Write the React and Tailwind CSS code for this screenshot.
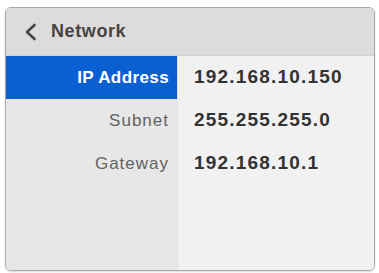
export default function App() {
  const rows = [
    { label: "IP Address", value: "192.168.10.150", active: true },
    { label: "Subnet", value: "255.255.255.0" },
    { label: "Gateway", value: "192.168.10.1" },
  ];

  return (
    <div className="h-[273px] w-[379px] bg-white pl-[5px] pt-[7px] font-['Liberation_Sans',Arial,sans-serif]">
      <div className="flex h-[264px] w-[370px] flex-col overflow-hidden rounded-[6px] border border-[#a9a9a9] shadow-[0_1px_2px_rgba(0,0,0,0.15)]">
        <div className="flex h-[48px] items-center gap-[14px] border-b border-[#d2d2d2] bg-[#dcdcdc] pl-[18px]">
          <svg width="13" height="18" viewBox="0 0 13 18" fill="none">
            <path d="M10.5 2 L3 9 L10.5 16" stroke="#444" strokeWidth="2.6" strokeLinecap="round" strokeLinejoin="round" />
          </svg>
          <span className="text-[18px] font-bold tracking-[0.6px] text-[#444]">Network</span>
        </div>
        <div className="flex flex-1">
          <div className="flex w-[172px] flex-col border-r border-[#e0e0e0] bg-[#e7e7e7]">
            {rows.map((r) => (
              <div
                key={r.label}
                className={
                  r.active
                    ? "flex h-[43px] items-center justify-end bg-[#0a60d3] pr-[8px] text-[17px] font-bold tracking-[0.4px] text-white"
                    : "flex h-[43px] items-center justify-end pr-[8px] text-[17px] tracking-[1px] text-[#626262]"
                }
              >
                {r.label}
              </div>
            ))}
          </div>
          <div className="flex flex-1 flex-col bg-[#f1f1f1] pl-[16px]">
            {rows.map((r) => (
              <div key={r.value} className="flex h-[43px] items-center text-[19px] font-bold tracking-[1.2px] text-[#333]">
                {r.value}
              </div>
            ))}
          </div>
        </div>
      </div>
    </div>
  );
}
